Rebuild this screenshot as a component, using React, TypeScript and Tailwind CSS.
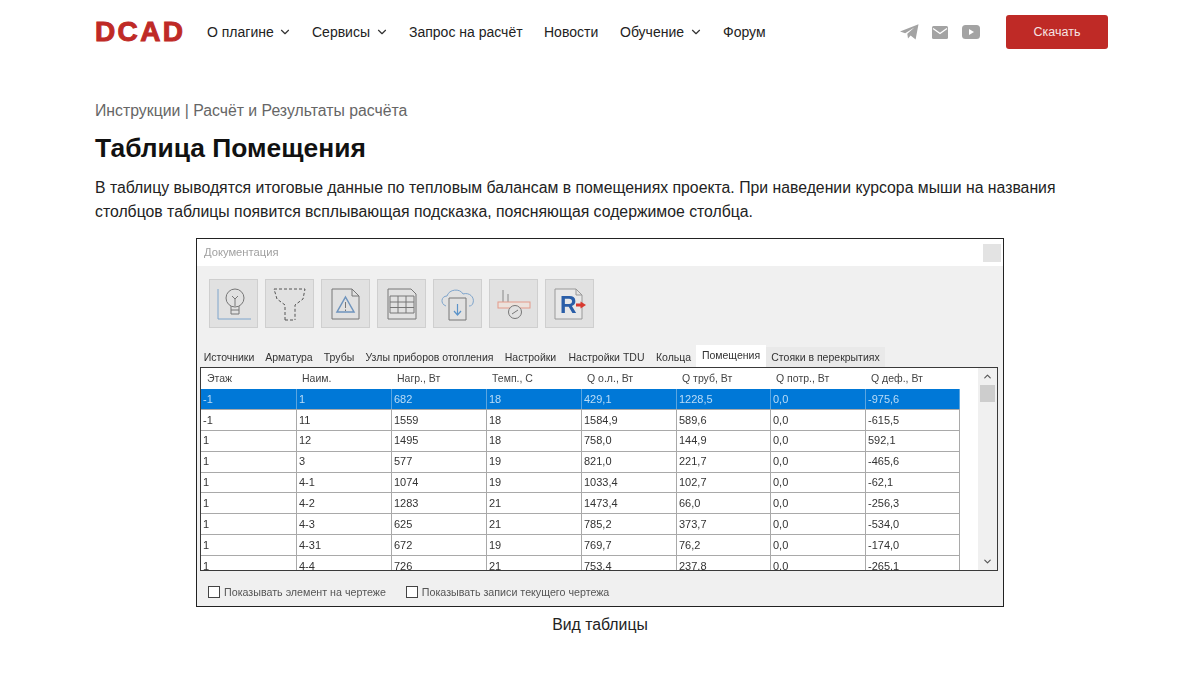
import { ChevronDown, ChevronUp } from 'lucide-react';

const navItems = [
  { label: 'О плагине', menu: true, width: 'w-[84px]' },
  { label: 'Сервисы', menu: true, width: 'w-[76px]' },
  { label: 'Запрос на расчёт', menu: false, width: 'w-[114px]' },
  { label: 'Новости', menu: false, width: 'w-[55px]' },
  { label: 'Обучение', menu: true, width: 'w-[82px]' },
  { label: 'Форум', menu: false, width: 'w-[42px]' },
];

const tabs = [
  { label: 'Источники', width: 'w-[62px]' },
  { label: 'Арматура', width: 'w-[58px]' },
  { label: 'Трубы', width: 'w-[42px]' },
  { label: 'Узлы приборов отопления', width: 'w-[139px]' },
  { label: 'Настройки', width: 'w-[63px]' },
  { label: 'Настройки TDU', width: 'w-[89px]' },
  { label: 'Кольца', width: 'w-[45px]' },
];

const columns = ['Этаж', 'Наим.', 'Нагр., Вт', 'Темп., С', 'Q о.л., Вт', 'Q труб, Вт', 'Q потр., Вт', 'Q деф., Вт'];

const rows = [
  ['-1', '1', '682', '18', '429,1', '1228,5', '0,0', '-975,6'],
  ['-1', '11', '1559', '18', '1584,9', '589,6', '0,0', '-615,5'],
  ['1', '12', '1495', '18', '758,0', '144,9', '0,0', '592,1'],
  ['1', '3', '577', '19', '821,0', '221,7', '0,0', '-465,6'],
  ['1', '4-1', '1074', '19', '1033,4', '102,7', '0,0', '-62,1'],
  ['1', '4-2', '1283', '21', '1473,4', '66,0', '0,0', '-256,3'],
  ['1', '4-3', '625', '21', '785,2', '373,7', '0,0', '-534,0'],
  ['1', '4-31', '672', '19', '769,7', '76,2', '0,0', '-174,0'],
  ['1', '4-4', '726', '21', '753,4', '237,8', '0,0', '-265,1'],
];

function Logo() {
  return (
    <span className="w-[88px] mr-[24px] text-[28px] leading-none font-bold tracking-[2.4px] text-[#bf2a26] [-webkit-text-stroke:1px_#bf2a26]">
      DCAD
    </span>
  );
}

function Socials() {
  return (
    <div className="flex items-center ml-auto mr-[26px] gap-[13px]">
      <svg width="19" height="16" viewBox="0 0 19 16" fill="#a3a3a3">
        <path d="M0 7.6 18.5.2 15.6 15.4 10.6 11.6 8 14.4 7.3 9.8 14.4 3.6 5.2 9.3Z" />
      </svg>
      <svg width="16" height="13" viewBox="0 0 16 13" className="mr-[1px]">
        <rect width="16" height="13" rx="1.5" fill="#a3a3a3" />
        <path d="M1 2.5 8 7.5 15 2.5" fill="none" stroke="#fff" strokeWidth="1.4" />
      </svg>
      <svg width="18" height="14" viewBox="0 0 18 14">
        <rect width="18" height="14" rx="3.5" fill="#a3a3a3" />
        <path d="M7 4 12 7 7 10Z" fill="#fff" />
      </svg>
    </div>
  );
}

function Header() {
  return (
    <header className="flex items-center h-[64px] pl-[95px] pr-[92px]">
      <Logo />
      <nav className="flex items-center gap-[21px] text-[14px] text-[#222222]">
        {navItems.map((item) => (
          <a key={item.label} className={`flex items-center justify-between ${item.width}`}>
            {item.label}
            {item.menu && <ChevronDown size={14} strokeWidth={2} className="mr-[-1px] text-[#333333]" />}
          </a>
        ))}
      </nav>
      <Socials />
      <button className="w-[102px] h-[34px] rounded-[3px] bg-[#bf2a26] text-[12.5px] text-[#f6e3e3]">Скачать</button>
    </header>
  );
}

function ToolButton({ children }: { children: React.ReactNode }) {
  return (
    <div className="w-[49px] h-[49px] border border-[#cfcfcf] bg-[#e1e1e1] flex items-center justify-center">
      <svg width="40" height="40" viewBox="0 0 40 40" fill="none" strokeWidth="1">
        {children}
      </svg>
    </div>
  );
}

function Toolbar() {
  return (
    <div className="flex gap-[7px] h-[81px] pt-[13px] pl-[12px]">
      <ToolButton>
        <path d="M4 5V35H37" stroke="#7fa5cc" />
        <circle cx="21" cy="14" r="9" stroke="#777777" />
        <path d="M17 22V30H25V22M21 22V15L18 12M21 15 24 12M17 26H25" stroke="#777777" />
      </ToolButton>
      <ToolButton>
        <path d="M4 5H35L33 15 25 21V36M15 36V21L7 15 4 5M15 36H25" stroke="#555555" strokeDasharray="3 2" />
      </ToolButton>
      <ToolButton>
        <path d="M6 5H26L33 12V35H6Z M26 5V12H33" stroke="#777777" />
        <path d="M19.500 13 28 28H11Z" stroke="#6f94bd" strokeWidth="1.5" />
        <path d="M19.500 18V24M19.500 25.500V27" stroke="#777777" />
      </ToolButton>
      <ToolButton>
        <path d="M6 5H29L34 10V35H6Z" stroke="#777777" />
        <path d="M8 12H32V29H8ZM8 18H32M8 23.500H32M16 12V29M24 12V29" stroke="#777777" />
      </ToolButton>
      <ToolButton>
        <path d="M8 22C2 20 3 12 9 12 11 5 22 4 25 10 31 8 37 13 35 19 34.500 21 33 22 31 22" stroke="#7fa5cc" />
        <path d="M11 14H28V36H11Z" stroke="#777777" fill="#e1e1e1" />
        <path d="M19.500 20V31M16 27 19.500 31 23 27" stroke="#5b93c9" strokeWidth="1.2" />
      </ToolButton>
      <ToolButton>
        <path d="M9 6V18M14 10V18" stroke="#888888" />
        <rect x="4" y="18" width="32" height="6" stroke="#e39a8a" fill="#ece2dc" />
        <circle cx="21" cy="28" r="6.500" stroke="#777777" fill="#e1e1e1" />
        <path d="M18 30 24 26" stroke="#777777" />
      </ToolButton>
      <ToolButton>
        <path d="M5 5H26L32 11V35H5Z M26 5V11H32" stroke="#999999" fill="#e8e8e8" />
        <text x="10" y="29" fontFamily="Liberation Sans, sans-serif" fontSize="23" fontWeight="700" fill="#2a5ea8">
          R
        </text>
        <path d="M26 21H32" stroke="#d8392f" strokeWidth="3" />
        <path d="M30.500 17.500 36 21 30.500 24.500Z" fill="#d8392f" />
      </ToolButton>
    </div>
  );
}

function Tabs() {
  return (
    <div className="flex h-[20px] ml-[1px] text-[#333333]">
      {tabs.map((tab) => (
        <div key={tab.label} className={`${tab.width} flex items-center justify-center pt-[1px] whitespace-nowrap`}>
          {tab.label}
        </div>
      ))}
      <div className="w-[70px] h-[22px] mt-[-2px] bg-white flex items-center justify-center text-[#333333]">Помещения</div>
      <div className="w-[119px] bg-[#e9e9e9] flex items-center justify-center pt-[1px] whitespace-nowrap">
        Стояки в перекрытиях
      </div>
    </div>
  );
}

function DataTable() {
  return (
    <div className="flex h-[204px] ml-[3px] mr-[5px] border-[1.5px] border-[#3a3a3a] bg-white overflow-hidden">
      <div className="w-[759px] shrink-0">
        <div className="grid grid-cols-[95px_95px_95px_95px_95px_94px_95px_94px] h-[21px] text-[#444444]">
          {columns.map((col) => (
            <div key={col} className="pl-[6px] flex items-center">
              {col}
            </div>
          ))}
        </div>
        {rows.map((row, i) => (
          <div
            key={i}
            className={`grid grid-cols-[96px_95px_95px_95px_95px_94px_95px_94px] h-[20.9px] border-b border-[#a9a9a9] text-[11px] ${
              i === 0 ? 'bg-[#0078d7] text-[#b9dcf7]' : 'text-[#333333]'
            }`}
          >
            {row.map((cell, j) => (
              <div
                key={j}
                className={`pl-[2px] flex items-center border-r ${i === 0 ? 'border-[#5aa5e0]' : 'border-[#a9a9a9]'}`}
              >
                {cell}
              </div>
            ))}
          </div>
        ))}
      </div>
      <div className="flex-1 flex justify-end bg-white">
        <div className="w-[19px] bg-[#f0f0f0] flex flex-col items-center justify-between py-[3px] text-[#555555]">
          <div className="flex flex-col items-center">
            <ChevronUp size={11} strokeWidth={2.5} />
            <div className="w-[15px] h-[17px] mt-[3px] bg-[#cdcdcd]" />
          </div>
          <ChevronDown size={11} strokeWidth={2.5} />
        </div>
      </div>
    </div>
  );
}

function Checkbox({ label }: { label: string }) {
  return (
    <label className="flex items-center gap-[4px]">
      <span className="w-[12px] h-[12px] border border-[#444444] bg-white" />
      {label}
    </label>
  );
}

function DocWindow() {
  return (
    <div className="w-[808px] h-[369px] ml-[101px] border border-[#222222] bg-[#f0f0f0] font-['Liberation_Sans',sans-serif] text-[10.5px] blur-[0.4px]">
      <div className="flex items-center justify-between h-[27px] bg-white pl-[7px] pr-[2px] text-[11.2px] text-[#a0a0a0]">
        Документация
        <div className="w-[18px] h-[18px] bg-[#e3e3e3]" />
      </div>
      <Toolbar />
      <Tabs />
      <DataTable />
      <div className="flex gap-[20px] pl-[11px] pt-[13px] text-[10.7px] text-[#555555]">
        <Checkbox label="Показывать элемент на чертеже" />
        <Checkbox label="Показывать записи текущего чертежа" />
      </div>
    </div>
  );
}

export default function App() {
  return (
    <div className="w-[1200px] h-[675px] overflow-hidden bg-white font-['Liberation_Sans',sans-serif]">
      <Header />
      <main className="pl-[95px] pr-[92px] pt-[35px]">
        <p className="text-[15.8px] leading-[24px] text-[#666666]">Инструкции | Расчёт и Результаты расчёта</p>
        <h1 className="mt-[8px] text-[26.4px] leading-[34px] font-bold text-[#111111]">Таблица Помещения</h1>
        <p className="mt-[11px] text-[15.8px] leading-[24px] text-[#222222]">
          В таблицу выводятся итоговые данные по тепловым балансам в помещениях проекта. При наведении курсора мыши на
          названия столбцов таблицы появится всплывающая подсказка, поясняющая содержимое столбца.
        </p>
        <figure className="mt-[14px]">
          <DocWindow />
          <figcaption className="mt-[7px] pr-[3px] text-center text-[15.8px] leading-[22px] text-[#222222]">
            Вид таблицы
          </figcaption>
        </figure>
      </main>
    </div>
  );
}
